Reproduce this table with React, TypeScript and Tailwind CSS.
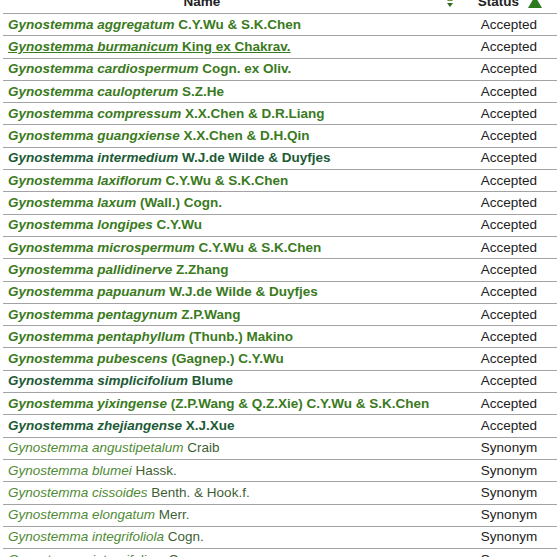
import React from "react";

type Row = { g: string; a: string; acc: boolean; dark?: boolean; u?: boolean };

const rows: Row[] = [
  { g: "Gynostemma aggregatum", a: "C.Y.Wu & S.K.Chen", acc: true },
  { g: "Gynostemma burmanicum", a: "King ex Chakrav.", acc: true, u: true },
  { g: "Gynostemma cardiospermum", a: "Cogn. ex Oliv.", acc: true },
  { g: "Gynostemma caulopterum", a: "S.Z.He", acc: true },
  { g: "Gynostemma compressum", a: "X.X.Chen & D.R.Liang", acc: true },
  { g: "Gynostemma guangxiense", a: "X.X.Chen & D.H.Qin", acc: true },
  { g: "Gynostemma intermedium", a: "W.J.de Wilde & Duyfjes", acc: true, dark: true },
  { g: "Gynostemma laxiflorum", a: "C.Y.Wu & S.K.Chen", acc: true },
  { g: "Gynostemma laxum", a: "(Wall.) Cogn.", acc: true },
  { g: "Gynostemma longipes", a: "C.Y.Wu", acc: true },
  { g: "Gynostemma microspermum", a: "C.Y.Wu & S.K.Chen", acc: true },
  { g: "Gynostemma pallidinerve", a: "Z.Zhang", acc: true },
  { g: "Gynostemma papuanum", a: "W.J.de Wilde & Duyfjes", acc: true },
  { g: "Gynostemma pentagynum", a: "Z.P.Wang", acc: true },
  { g: "Gynostemma pentaphyllum", a: "(Thunb.) Makino", acc: true },
  { g: "Gynostemma pubescens", a: "(Gagnep.) C.Y.Wu", acc: true },
  { g: "Gynostemma simplicifolium", a: "Blume", acc: true, dark: true },
  { g: "Gynostemma yixingense", a: "(Z.P.Wang & Q.Z.Xie) C.Y.Wu & S.K.Chen", acc: true },
  { g: "Gynostemma zhejiangense", a: "X.J.Xue", acc: true, dark: true },
  { g: "Gynostemma angustipetalum", a: "Craib", acc: false },
  { g: "Gynostemma blumei", a: "Hassk.", acc: false },
  { g: "Gynostemma cissoides", a: "Benth. & Hook.f.", acc: false },
  { g: "Gynostemma elongatum", a: "Merr.", acc: false },
  { g: "Gynostemma integrifoliola", a: "Cogn.", acc: false },
  { g: "Gynostemma integrifolium", a: "Cogn.", acc: false },
];

export default function App() {
  return (
    <div
      className="w-[557px] h-[557px] overflow-hidden bg-white text-[13.5px] leading-[16px]"
      style={{ fontFamily: '"Liberation Sans", Arial, sans-serif' }}
    >
      <div className="mt-[-9px] pl-[3px]">
        <div className="flex h-[22px] items-center font-bold text-[#222]">
          <div className="w-[398px] text-center">Name</div>
          <div className="w-[58px] flex justify-end pr-[6px]">
            <svg width="6" height="10" viewBox="0 0 6 10">
              <path d="M3 0 L6 4 L0 4 Z" fill="#6a9a3a" />
              <path d="M3 10 L6 6 L0 6 Z" fill="#2e6b1e" />
            </svg>
          </div>
          <div className="flex-1 flex items-center justify-center gap-[9px] pl-[4px]">
            <span>Status</span>
            <svg width="14" height="12" viewBox="0 0 14 12">
              <path d="M7 0 L14 12 L0 12 Z" fill="#2e7a1e" />
            </svg>
          </div>
        </div>
        {rows.map((r, i) => (
          <div
            key={i}
            className="flex h-[22.3px] items-center border-t-[1.5px] border-[#a3a3a3]"
          >
            <div className="w-[456px] pl-[5px] whitespace-nowrap">
              <span
                className={
                  (r.acc ? "font-bold " : "") +
                  (r.u ? "underline " : "") +
                  (r.acc
                    ? r.dark
                      ? "text-[#1c5a36]"
                      : "text-[#3a7a20]"
                    : "text-[#4f8a34]")
                }
              >
                <i>{r.g}</i>{" "}
                <span className={r.acc ? "" : "text-[#3f5f35]"}>{r.a}</span>
              </span>
            </div>
            <div className="flex-1 text-center text-[#222] pl-[2px]">
              {r.acc ? "Accepted" : "Synonym"}
            </div>
          </div>
        ))}
      </div>
    </div>
  );
}
